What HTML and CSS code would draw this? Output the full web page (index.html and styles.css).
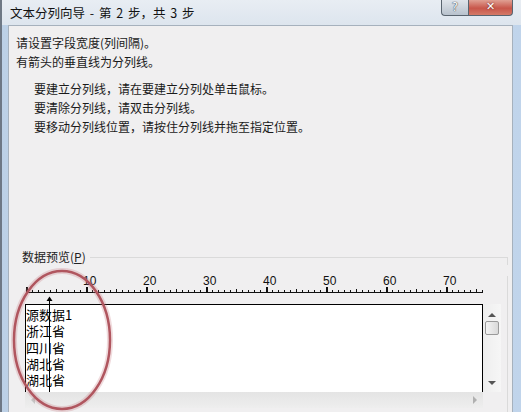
FILE: index.html
```html
<!DOCTYPE html>
<html lang="zh-CN">
<head>
  <meta charset="UTF-8">
  <title>文本分列向导</title>
  <link rel="stylesheet" href="styles.css">
</head>
<body>

<div class="window">

  <!--标题栏-->
  <div class="titlebar">
    <span class="title">文本分列向导 - 第 2 步，共 3 步</span>
    <div class="caption-btns">
      <span class="cap-btn help">?</span>
      <span class="cap-btn close">✕</span>
    </div>
  </div>

  <div class="client">
    <div class="intro">
      <p>请设置字段宽度(列间隔)。</p>
      <p>有箭头的垂直线为分列线。</p>
    </div>

    <div class="tips">
      <p>要建立分列线，请在要建立分列处单击鼠标。</p>
      <p>要清除分列线，请双击分列线。</p>
      <p>要移动分列线位置，请按住分列线并拖至指定位置。</p>
    </div>

    <!--数据预览-->
    <div class="group">
      <div class="group-head"><span>数据预览(<u>P</u>)</span></div>
      <div class="group-body">
        <div class="ruler">
          <div class="ruler-nums">
            <span>10</span><span>20</span><span>30</span><span>40</span><span>50</span><span>60</span><span>70</span>
          </div>
          <div class="ruler-ticks"></div>
        </div>

        <div class="preview">
          <div class="data-box">
            <div class="rows">
              <div>源数据1</div>
              <div>浙江省</div>
              <div>四川省</div>
              <div>湖北省</div>
              <div>湖北省</div>
            </div>
            <!--分列线-->
            <svg class="split-line" width="7" height="96" viewBox="0 0 7 96">
              <polygon points="0.5,5 3.5,0.5 6.5,5" fill="#000"/>
              <line x1="3.5" y1="3" x2="3.5" y2="96" stroke="#000" stroke-width="1"/>
            </svg>
          </div>
          <div class="vscroll">
            <span class="tri up"></span>
            <span class="thumb"></span>
            <span class="tri down"></span>
          </div>
        </div>

        <div class="hscroll">
          <span class="tri left"></span>
          <span class="tri right"></span>
        </div>
      </div>

      <!--红圈标注-->
      <svg class="mark" width="120" height="170" viewBox="0 0 120 170">
        <ellipse cx="46" cy="90" rx="48" ry="69" fill="none" stroke="rgba(196,110,120,0.25)" stroke-width="6"/>
        <ellipse cx="46" cy="90" rx="48" ry="69" fill="none" stroke="#b0565f" stroke-width="2.5"/>
      </svg>
    </div>
  </div>
</div>

</body>
</html>
```

FILE: styles.css
```css
* {
  margin: 0;
  padding: 0;
  box-sizing: border-box;
}

body {
  width: 521px;
  height: 412px;
  overflow: hidden;
  font-family: "Noto Sans CJK SC", sans-serif;
  font-size: 12px;
  color: #1a1a1a;
}

/*窗口外框*/
.window {
  height: 412px;
  display: flex;
  flex-direction: column;
  padding: 0 8px 0 6px;
  border-left: 2px solid #6e7885;
  background: linear-gradient(to right, #bcd0e6, #d3e0ee 50%, #c0d4eb);
}

.titlebar {
  height: 25px;
  margin: 0 -8px 0 -6px;
  padding: 0 8px 0 8px;
  display: flex;
  justify-content: space-between;
  align-items: flex-start;
  background: linear-gradient(#e8edf3, #dde5ee);
}

.title {
  line-height: 25px;
  font-size: 12.5px;
  word-spacing: 2px;
  color: #111;
}

.caption-btns {
  display: flex;
}

.cap-btn {
  height: 16px;
  border: 1px solid #59646f;
  border-top: none;
  text-align: center;
  line-height: 14px;
  color: #fff;
  font-family: "DejaVu Sans", sans-serif;
}

.help {
  width: 27px;
  border-radius: 0 0 0 4px;
  border-right: none;
  font-size: 12px;
  background: linear-gradient(#dfe4ea, #b8c2cd);
  text-shadow: 0 0 1px #2f3a46, 0 0 1px #2f3a46;
}

.close {
  width: 45px;
  border-radius: 0 0 4px 0;
  font-size: 11px;
  font-weight: bold;
  background: linear-gradient(#e0a093, #c8564a 55%, #d47a68);
  text-shadow: 0 0 2px #5a1a14;
}

/*对话框内容区*/
.client {
  flex: 1;
  background-color: #f0eff0;
  border: 1px solid #a6b1bd;
  border-bottom: none;
  padding: 0 4px 0 7px;
}

.intro {
  padding-top: 7px;
  line-height: 19px;
}

.tips {
  margin-top: 8px;
  padding-left: 18px;
  line-height: 19px;
}

.group {
  margin-top: 114px;
  position: relative;
}

.group-head {
  display: flex;
  align-items: flex-start;
  height: 14px;
  line-height: 14px;
}

.group-head span {
  padding: 0 4px 0 6px;
  color: #222;
}

.group-head::after {
  content: "";
  flex: 1;
  height: 7px;
  margin-top: 7px;
  border-top: 1px solid #dadada;
  border-right: 1px solid #dadada;
}

.group-body {
  border-right: 1px solid #dadada;
  height: 150px;
}

/*标尺*/
.ruler {
  width: 457px;
  margin: 12px 0 0 10px;
}

.ruler-nums {
  display: flex;
  height: 11px;
  padding-left: 57px;
  font-family: "Liberation Sans", sans-serif;
  font-size: 12px;
  line-height: 11px;
  color: #111;
}

.ruler-nums span {
  width: 60px;
  flex: none;
}

.ruler-ticks {
  height: 6px;
  background:
    linear-gradient(#111, #111) left bottom / 100% 1px no-repeat,
    repeating-linear-gradient(to right, #111 0 1px, transparent 1px 6px) left bottom / 100% 3px no-repeat,
    repeating-linear-gradient(to right, #111 0 1px, transparent 1px 30px) left bottom / 100% 4px no-repeat,
    repeating-linear-gradient(to right, #111 0 2px, transparent 2px 60px) left bottom / 100% 6px no-repeat;
}

/*预览框*/
.preview {
  display: flex;
  margin: 11px 0 0 9px;
  height: 88px;
}

.data-box {
  width: 458px;
  position: relative;
  background-color: #fff;
  border: 1px solid #000;
  border-bottom: none;
}

.rows {
  padding-top: 2px;
  font-size: 13px;
  line-height: 16.25px;
  color: #000;
}

.split-line {
  position: absolute;
  left: 20px;
  top: -9px;
}

.vscroll {
  width: 18px;
  display: flex;
  flex-direction: column;
  align-items: center;
  padding: 7px 0 7px;
  background: linear-gradient(to right, #eeeeee, #f6f6f6);
}

.tri {
  width: 0;
  height: 0;
  border: 4px solid transparent;
}

.tri.up {
  border-top: none;
  border-bottom-color: #555;
  margin-top: 2px;
}

.tri.down {
  border-bottom: none;
  border-top-color: #555;
  margin-top: auto;
}

.thumb {
  width: 14px;
  height: 14px;
  margin-top: 4px;
  border: 1px solid #9a9a9a;
  border-radius: 2px;
  background: linear-gradient(to right, #f4f4f4, #d9d9d9);
}

.hscroll {
  width: 458px;
  height: 16px;
  margin-left: 9px;
  display: flex;
  justify-content: space-between;
  align-items: center;
  padding: 0 6px 0 6px;
  background: linear-gradient(#e4e4e4, #eeeeee);
}

.tri.left {
  border-left: none;
  border-right-color: #c4c4c4;
}

.tri.right {
  border-right: none;
  border-left-color: #b0b0b0;
}

.mark {
  position: absolute;
  left: 0;
  top: 0;
  overflow: visible;
}
```
